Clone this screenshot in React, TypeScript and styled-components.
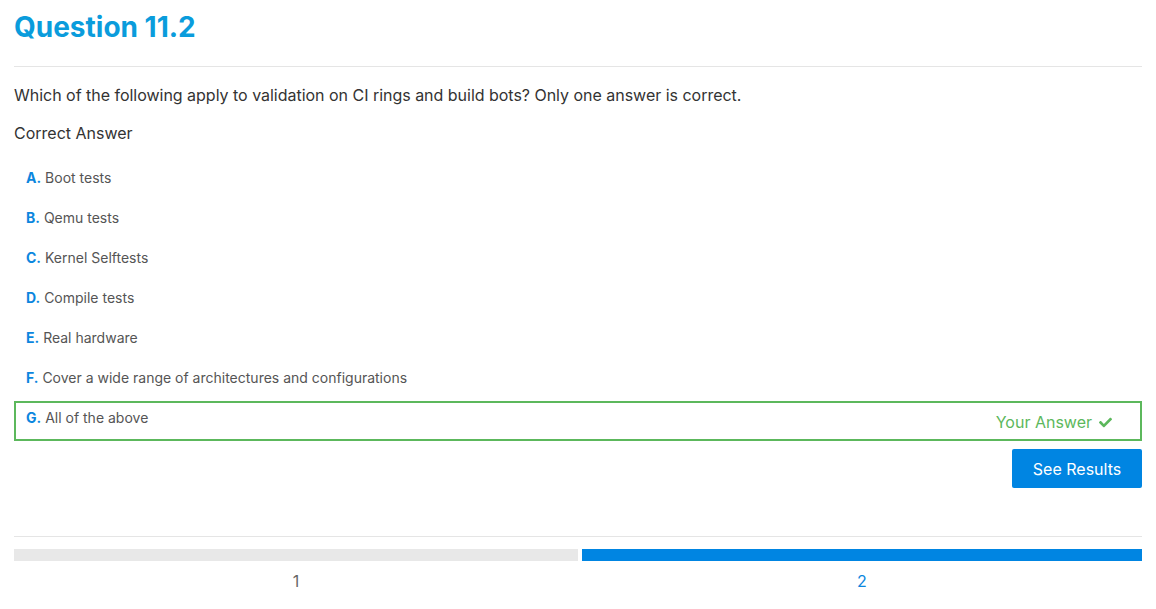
import React from "react";
import styled, { createGlobalStyle } from "styled-components";
import { FaCheck } from "react-icons/fa";

const GlobalStyle = createGlobalStyle`
  html, body {
    margin: 0;
    padding: 0;
    background: #fff;
    font-family: Inter, "Noto Sans", sans-serif;
    color: #333;
  }
`;

const options = [
  { letter: "A", text: "Boot tests" },
  { letter: "B", text: "Qemu tests" },
  { letter: "C", text: "Kernel Selftests" },
  { letter: "D", text: "Compile tests" },
  { letter: "E", text: "Real hardware" },
  { letter: "F", text: "Cover a wide range of architectures and configurations" },
  { letter: "G", text: "All of the above" },
];

const chosen = "G";

export default function App() {
  return (
    <>
      <GlobalStyle />
      <Page>
        <Title>Question 11.2</Title>
        <Rule />
        <Prompt>
          Which of the following apply to validation on CI rings and build bots? Only one answer is
          correct.
        </Prompt>
        <Verdict>Correct Answer</Verdict>

        <OptionList>
          {options.map(o => (
            <Option key={o.letter} $picked={o.letter === chosen}>
              <OptionText>
                <Letter>{o.letter}.</Letter> {o.text}
              </OptionText>
              {o.letter === chosen ? (
                <YourAnswer>
                  Your Answer <FaCheck size={13} />
                </YourAnswer>
              ) : null}
            </Option>
          ))}
        </OptionList>

        <Actions>
          <ResultsButton>See Results</ResultsButton>
        </Actions>

        <FooterRule />

        <Steps>
          <Step $first>
            <StepBar $active={false} />
            <StepNumber $active={false}>1</StepNumber>
          </Step>
          <Step $first={false}>
            <StepBar $active />
            <StepNumber $active>2</StepNumber>
          </Step>
        </Steps>
      </Page>
    </>
  );
}

const Page = styled.div`
  padding: 10px 14px 0;
  display: flex;
  flex-direction: column;
`;

const Title = styled.h1`
  margin: 0;
  font-size: 28px;
  line-height: 34px;
  font-weight: 700;
  color: #0a9cdc;
`;

const Rule = styled.hr`
  margin: 22px 0 0;
  border: 0;
  border-top: 1px solid #e5e5e5;
`;

const Prompt = styled.p`
  margin: 16px 0 0;
  font-size: 16px;
  line-height: 24px;
  letter-spacing: -0.02px;
  color: #333;
`;

const Verdict = styled.p`
  margin: 14px 0 0;
  font-size: 16px;
  line-height: 24px;
  color: #333;
`;

const OptionList = styled.div`
  margin-top: 16px;
  display: flex;
  flex-direction: column;
`;

const Option = styled.div<{ $picked: boolean }>`
  height: 40px;
  box-sizing: border-box;
  border: 2px solid ${p => (p.$picked ? "#5cb85c" : "transparent")};
  padding: 6px 28px 0 10px;
  display: flex;
  justify-content: space-between;
  align-items: flex-start;
`;

const OptionText = styled.span`
  font-size: 14px;
  line-height: 18px;
  color: #555;
`;

const Letter = styled.b`
  color: #0b86de;
  font-weight: 700;
`;

const YourAnswer = styled.span`
  display: flex;
  align-items: center;
  gap: 7px;
  margin-top: 3px;
  font-size: 16px;
  line-height: 20px;
  color: #5cb85c;
`;

const Actions = styled.div`
  margin-top: 8px;
  display: flex;
  justify-content: flex-end;
`;

const ResultsButton = styled.button`
  width: 130px;
  height: 39px;
  border: 0;
  border-radius: 2px;
  background: #0085e2;
  color: #fff;
  font-family: Inter, "Noto Sans", sans-serif;
  font-size: 16px;
  cursor: pointer;
`;

const FooterRule = styled.hr`
  margin: 48px 0 0;
  border: 0;
  border-top: 1px solid #e5e5e5;
`;

const Steps = styled.div`
  margin-top: 12px;
  display: flex;
  gap: 4px;
`;

const Step = styled.div<{ $first: boolean }>`
  flex: ${p => (p.$first ? "0 0 50%" : "1")};
  display: flex;
  flex-direction: column;
  align-items: center;
`;

const StepBar = styled.div<{ $active: boolean }>`
  width: 100%;
  height: 12px;
  background: ${p => (p.$active ? "#0085e2" : "#e8e8e8")};
`;

const StepNumber = styled.span<{ $active: boolean }>`
  margin-top: 8px;
  font-size: 16px;
  line-height: 24px;
  color: ${p => (p.$active ? "#0b86de" : "#666")};
`;
